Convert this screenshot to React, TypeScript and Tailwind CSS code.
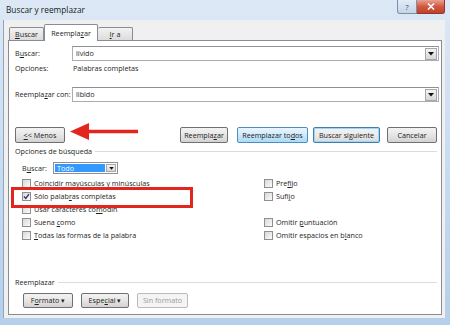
import type { ReactNode } from 'react';

const font = "font-['Segoe_UI','Open_Sans','Noto_Sans',sans-serif]";

function Btn({ children, w, kind = 'normal', h = 'h-[16px]' }: { children: ReactNode; w: string; kind?: 'normal' | 'hot' | 'default' | 'disabled'; h?: string }) {
  const styles = {
    normal: 'border-[#707070] bg-linear-to-b from-[#f3f3f3] via-[#e6e6e6] to-[#d2d2d2] text-[#222]',
    hot: 'border-[#4f8dc0] bg-linear-to-b from-[#eaf6fd] via-[#cfeafc] to-[#a9dbf6] text-[#222]',
    default: 'border-[#3c7fb1] shadow-[inset_0_0_0_1px_#9fd5f4] bg-linear-to-b from-[#f2f2f2] via-[#ebebeb] to-[#d9d9d9] text-[#222]',
    disabled: 'border-[#b8bcbf] bg-[#f4f4f4] text-[#9a9a9a]',
  }[kind];
  return (
    <div className={`${w} ${h} shrink-0 border rounded-[2px] flex items-center justify-center whitespace-nowrap ${styles}`}>
      {children}
    </div>
  );
}

function Check({ checked = false }: { checked?: boolean }) {
  return (
    <div className="w-[9px] h-[9px] shrink-0 border border-[#8f8f8f] bg-linear-to-br from-[#d8d8d8] to-[#fbfbfb] flex items-center justify-center">
      {checked && (
        <svg width="7" height="7" viewBox="0 0 7 7">
          <path d="M1 3.6 L2.8 5.4 L6 1.2" fill="none" stroke="#2a3a70" strokeWidth="1.4" />
        </svg>
      )}
    </div>
  );
}

function Row({ checked, children }: { checked?: boolean; children: ReactNode }) {
  return (
    <div className="h-[13px] flex items-center gap-[3px] whitespace-nowrap">
      <Check checked={checked} />
      <span>{children}</span>
    </div>
  );
}

function DropArrow() {
  return (
    <div className="w-[12px] h-[12px] border border-[#a7a7a7] bg-linear-to-b from-[#f4f4f4] to-[#d6d6d6] flex items-center justify-center">
      <svg width="6" height="4" viewBox="0 0 6 4">
        <path d="M0 0 H6 L3 3.5 Z" fill="#111" />
      </svg>
    </div>
  );
}

function Field({ value }: { value: string }) {
  return (
    <div className="flex-1 h-[15px] border border-[#abadb3] border-t-[#8e9097] bg-white flex items-center pl-[3px] pr-[1px]">
      <span className="flex-1">{value}</span>
      <DropArrow />
    </div>
  );
}

export default function App() {
  return (
    <div className={`w-[450px] h-[325px] bg-linear-to-b from-[#dce8f5] via-[#c9dcf0] to-[#b5cfea] flex flex-col pl-[3px] pr-[5px] text-[7.2px] text-[#1e1e1e] overflow-hidden ${font}`}>
      {/* title bar */}
      <div className="h-[20px] shrink-0 flex items-start justify-between">
        <span className="pl-[3px] pt-[4px] text-[8.3px] text-[#1a1a1a]">Buscar y reemplazar</span>
        <div className="flex">
          <div className="w-[20px] h-[14px] border border-[#7d8fa8] border-t-0 rounded-bl-[3px] bg-linear-to-b from-[#e4ecf6] to-[#c4d5e8] flex items-center justify-center text-[8px] text-[#3c4e66]">?</div>
          <div className="w-[28px] h-[14px] border border-[#8a3a2e] border-t-0 border-l-0 rounded-br-[3px] bg-linear-to-b from-[#e8a090] via-[#d2573f] to-[#c2412b] flex items-center justify-center">
            <svg width="8" height="7" viewBox="0 0 8 7">
              <path d="M1 0.5 L7 6.5 M7 0.5 L1 6.5" stroke="#fff" strokeWidth="1.6" />
            </svg>
          </div>
        </div>
      </div>

      {/* client area */}
      <div className="h-[298px] shrink-0 bg-[#f0f0f0] border-l border-[#8ea6c4] flex flex-col pl-[4px] pr-[3px] pb-[3px]">
        {/* tabs */}
        <div className="h-[20px] shrink-0 flex items-end pl-[1px] relative z-10">
          <div className="w-[35px] h-[13px] border border-b-0 border-[#898c95] rounded-t-[2px] bg-linear-to-b from-[#f2f2f2] to-[#dcdcdc] flex items-center justify-center">
            <span><span className="underline">B</span>uscar</span>
          </div>
          <div className="w-[54px] h-[17px] -mb-px border border-b-0 border-[#898c95] rounded-t-[2px] bg-white flex items-center justify-center">
            <span>Reempla<span className="underline">z</span>ar</span>
          </div>
          <div className="w-[35px] h-[13px] border border-b-0 border-l-0 border-[#898c95] rounded-t-[2px] bg-linear-to-b from-[#f2f2f2] to-[#dcdcdc] flex items-center justify-center">
            <span><span className="underline">I</span>r a</span>
          </div>
        </div>

        {/* panel */}
        <div className="flex-1 min-h-0 border border-[#898c95] bg-white relative flex flex-col pl-[6px] pr-[2px] pt-[5px]">
          <div className="flex items-center">
            <span className="w-[57px] shrink-0 whitespace-nowrap">B<span className="underline">u</span>scar:</span>
            <Field value="lívido" />
          </div>
          <div className="h-[14px] flex items-center whitespace-nowrap">
            <span className="w-[58px] shrink-0">Opciones:</span>
            <span>Palabras completas</span>
          </div>
          <div className="mt-[12px] flex items-center">
            <span className="w-[57px] shrink-0 whitespace-nowrap">Reempla<span className="underline">z</span>ar con:</span>
            <Field value="libido" />
          </div>

          {/* action buttons */}
          <div className="mt-[25px] flex items-center pr-[2px]">
            <Btn w="w-[50px]"><span><span className="underline">&lt;</span>&lt; Menos</span></Btn>
            <div className="flex-1" />
            <Btn w="w-[48px]"><span>Reempla<span className="underline">z</span>ar</span></Btn>
            <div className="w-[9px]" />
            <Btn w="w-[71px]" kind="hot"><span>Reemplazar to<span className="underline">d</span>os</span></Btn>
            <div className="w-[5px]" />
            <Btn w="w-[67px]" kind="default">Buscar siguiente</Btn>
            <div className="w-[7px]" />
            <Btn w="w-[50px]">Cancelar</Btn>
          </div>

          {/* search options group */}
          <div className="mt-[3px] h-[11px] flex items-center gap-[3px] pr-[2px] whitespace-nowrap">
            <span>Opciones de búsqueda</span>
            <div className="flex-1 h-px bg-[#dcdcdc]" />
          </div>
          <div className="mt-[5px] flex items-center pl-[7px] h-[12px]">
            <span className="w-[31px]">B<span className="underline">u</span>scar:</span>
            <div className="w-[65px] h-[12px] border border-[#8e9097] bg-white flex items-center p-px">
              <div className="flex-1 h-full bg-[#3399ff] text-white flex items-center pl-[2px] mr-[1px]">Todo</div>
              <div className="w-[10px] h-full border border-[#a7a7a7] bg-linear-to-b from-[#f4f4f4] to-[#d6d6d6] flex items-center justify-center">
                <svg width="5" height="3" viewBox="0 0 6 4"><path d="M0 0 H6 L3 3.5 Z" fill="#111" /></svg>
              </div>
            </div>
          </div>
          <div className="mt-[3px] flex pl-[7px]">
            <div className="w-[242px] flex flex-col">
              <Row>Coincidir mayúsculas y minúsculas</Row>
              <Row checked>Sólo palab<span className="underline">r</span>as completas</Row>
              <Row>Usar caracteres co<span className="underline">m</span>odín</Row>
              <Row>Suena <span className="underline">c</span>omo</Row>
              <Row><span className="underline">T</span>odas las formas de la palabra</Row>
            </div>
            <div className="flex flex-col">
              <Row>Pre<span className="underline">f</span>ijo</Row>
              <Row>Sufi<span className="underline">j</span>o</Row>
              <div className="h-[13px]" />
              <Row>Omitir <span className="underline">p</span>untuación</Row>
              <Row>Omitir espacios en b<span className="underline">l</span>anco</Row>
            </div>
          </div>

          {/* replace group */}
          <div className="mt-[35px] h-[11px] flex items-center gap-[3px] pr-[2px]">
            <span>Reemplazar</span>
            <div className="flex-1 h-px bg-[#dcdcdc]" />
          </div>
          <div className="mt-[5px] flex items-center pl-[8px] gap-[8px]">
            <Btn w="w-[50px]" h="h-[15px]"><span>F<span className="underline">o</span>rmato ▾</span></Btn>
            <Btn w="w-[48px]" h="h-[15px]"><span>Espe<span className="underline">c</span>ial ▾</span></Btn>
            <Btn w="w-[51px]" h="h-[15px]" kind="disabled">Sin formato</Btn>
          </div>

          {/* annotations */}
          <div className="absolute left-[2px] top-[146px] w-[182px] h-[21px] border-[3px] border-[#e3261d]" />
          <svg className="absolute left-[61px] top-[81px]" width="70" height="20" viewBox="0 0 70 20">
            <path d="M16 9.5 H68" stroke="#e3261d" strokeWidth="3.5" />
            <path d="M0 9.5 L19 1 L19 18 Z" fill="#e3261d" />
          </svg>
        </div>
      </div>
    </div>
  );
}
